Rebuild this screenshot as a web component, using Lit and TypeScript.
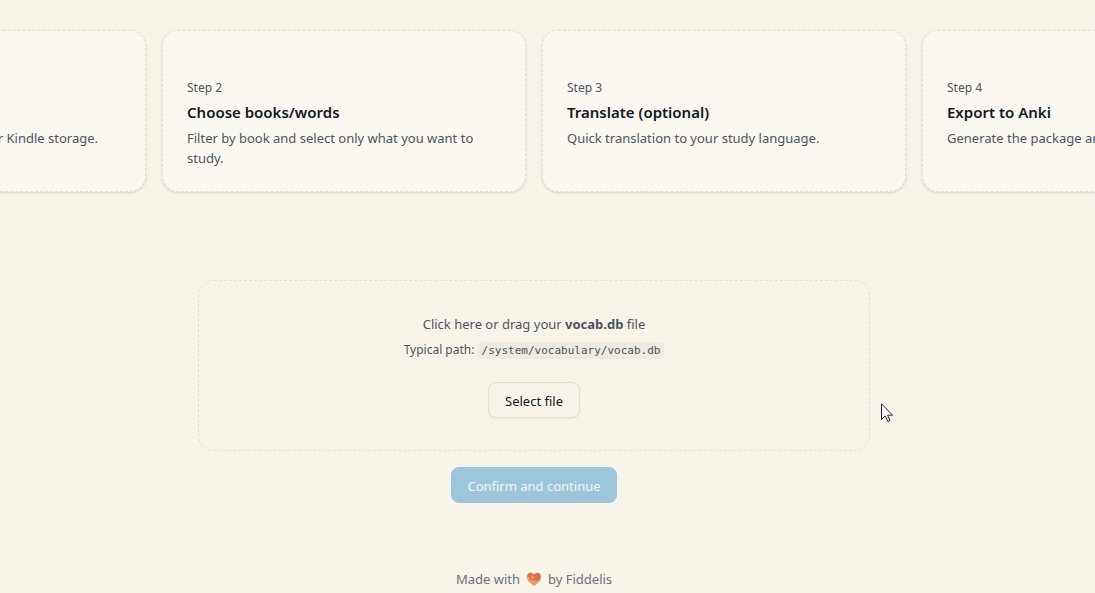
import { LitElement, html, css } from "lit";
import { customElement, property } from "lit/decorators.js";

const STEPS = [
  { label: "Step 1", title: "Upload vocab.db", text: "Take the vocab.db file from your Kindle storage." },
  { label: "Step 2", title: "Choose books/words", text: "Filter by book and select only what you want to study." },
  { label: "Step 3", title: "Translate (optional)", text: "Quick translation to your study language." },
  { label: "Step 4", title: "Export to Anki", text: "Generate the package and import it into Anki." },
];

@customElement("step-card")
class StepCard extends LitElement {
  @property() label = "";
  @property() heading = "";
  @property() text = "";

  static styles = css`
    :host {
      display: block;
      box-sizing: border-box;
      padding: 49px 24px 23px;
      border: 1px dashed #e2dfd5;
      border-radius: 16px;
      background: #fbf8f1;
      box-shadow: 0 1px 3px rgba(0, 0, 0, 0.1), 0 1px 2px -1px rgba(0, 0, 0, 0.1);
    }
    .label {
      font-size: 12px;
      line-height: 16px;
      color: #4b5563;
    }
    .title {
      margin: 4px 0;
      font-size: 15px;
      line-height: 24px;
      font-weight: 600;
      color: #111827;
    }
    .text {
      margin: 0;
      font-size: 13px;
      line-height: 20px;
      color: #4b5563;
    }
  `;

  render() {
    return html`
      <div class="label">${this.label}</div>
      <h3 class="title">${this.heading}</h3>
      <p class="text">${this.text}</p>
    `;
  }
}

@customElement("app-root")
class AppRoot extends LitElement {
  static styles = css`
    :host {
      display: block;
      box-sizing: border-box;
      min-height: 100vh;
      overflow: hidden;
      padding: 30px 27px 0 0;
      background: #f8f4e9;
      font-family: "Noto Sans", sans-serif;
      font-size: 13px;
      line-height: 20px;
      color: #4b5563;
    }
    .steps {
      display: flex;
      justify-content: center;
      gap: 16px;
    }
    .steps step-card {
      flex: 0 0 364px;
    }
    main {
      display: flex;
      flex-direction: column;
      align-items: center;
      gap: 16px;
      margin-top: 88px;
    }
    .drop {
      position: relative;
      box-sizing: border-box;
      width: 100%;
      max-width: 672px;
      padding: 33px 32px 32px;
      border: 1px dashed #e2dfd5;
      border-radius: 16px;
      display: flex;
      flex-direction: column;
      align-items: center;
    }
    .drop p {
      margin: 0;
    }
    .drop .path {
      margin: 6px 0 21px;
      font-size: 12px;
    }
    code {
      padding: 2px 4px;
      border-radius: 4px;
      background: #edeadf;
      font-family: "DejaVu Sans Mono", monospace;
      font-size: 11px;
    }
    button {
      box-sizing: border-box;
      height: 36px;
      padding: 2px 16px 0;
      border: 1px solid #e2dfd5;
      border-radius: 8px;
      font: inherit;
    }
    .select {
      background: #f8f4e9;
      color: #111827;
      box-shadow: 0 1px 2px rgba(0, 0, 0, 0.05);
    }
    .confirm {
      padding: 2px 15px 0;
      border-color: #9cc6de;
      background: #9cc6de;
      color: #f4f5ee;
    }
    .cursor {
      position: absolute;
      left: calc(100% + 12px);
      top: 122px;
    }
    footer {
      display: flex;
      justify-content: center;
      align-items: center;
      gap: 6px;
      margin-top: 66px;
      color: #6b7280;
    }
    a {
      color: inherit;
      text-decoration: none;
    }
  `;

  render() {
    return html`
      <section class="steps">
        ${STEPS.map((s) => html`<step-card .label=${s.label} .heading=${s.title} .text=${s.text}></step-card>`)}
      </section>
      <main>
        <div class="drop">
          <p>Click here or drag your <strong>vocab.db</strong> file</p>
          <p class="path">Typical path: <code>/system/vocabulary/vocab.db</code></p>
          <button class="select" type="button">Select file</button>
          <svg class="cursor" width="12" height="20" viewBox="0 0 12 20" aria-hidden="true">
            <path d="M.5 .8V16.5L4.2 13L6.8 18.6L9 17.6L6.6 12.2H11.5Z" fill="#fff" stroke="#1b2438" stroke-width="1" />
          </svg>
        </div>
        <button class="confirm" type="button" disabled>Confirm and continue</button>
      </main>
      <footer>
        <span>Made with</span>
        <svg width="16" height="14" viewBox="0 0 16 14" role="img" aria-label="love">
          <path d="M8 13.6C4.5 11.4 1 8.3 1 4.7C1 2.2 2.6 .7 4.7 .7C6.2 .7 7.3 1.4 8 2.5C8.7 1.4 9.8 .7 11.3 .7C13.4 .7 15 2.2 15 4.7C15 8.3 11.5 11.4 8 13.6Z" fill="#d9714e" />
          <path d="M1.1 4.8L3 4.8L4.2 7.6L8.5 8.8L13.8 8.2C12.6 10.4 10.2 12.2 8 13.6C4.5 11.4 1.1 8.3 1.1 4.8Z" fill="#f39a74" />
          <path d="M5 3L8 4.4L7.6 7L5 6.4Z" fill="#f0916b" />
        </svg>
        <span>by <a href="#">Fiddelis</a></span>
      </footer>
    `;
  }
}
